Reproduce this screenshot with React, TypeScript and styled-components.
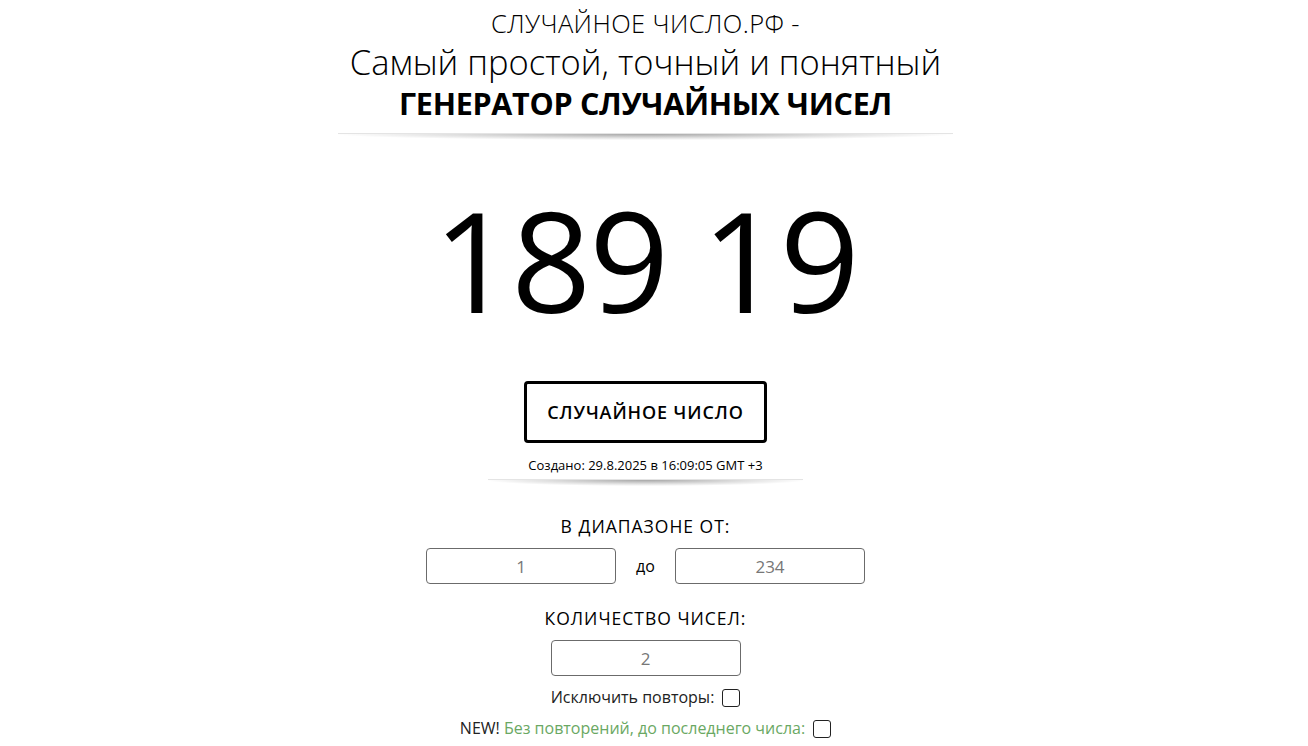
import React from "react";
import styled, { createGlobalStyle } from "styled-components";

const GlobalStyle = createGlobalStyle`
  html, body {
    margin: 0;
    padding: 0;
    background: #fff;
  }
  body {
    font-family: "Open Sans", "Noto Sans", sans-serif;
    color: #000;
  }
`;

// the original page has a vertical scrollbar, so its centre sits ~9px left
const Page = styled.div`
  display: flex;
  flex-direction: column;
  align-items: center;
  box-sizing: border-box;
  width: 100%;
  padding: 5px 17px 0 0;
`;

const Header = styled.header`
  display: flex;
  flex-direction: column;
  align-items: center;
  width: 615px;
  padding-bottom: 10px;
`;

const SiteName = styled.div`
  font-size: 25.5px;
  font-weight: 300;
  line-height: 36px;
  letter-spacing: 0.4px;
`;

const Tagline = styled.div`
  font-size: 34.5px;
  font-weight: 300;
  line-height: 42px;
`;

const Title = styled.h1`
  margin: 0;
  font-size: 30.5px;
  font-weight: 700;
  line-height: 40px;
  letter-spacing: -0.3px;
`;

const Divider = styled.div<{ $width: number }>`
  width: ${(p) => p.$width}px;
  height: 6px;
  background: radial-gradient(
    ellipse at 50% 0%,
    rgba(0, 0, 0, 0.35) 0%,
    rgba(0, 0, 0, 0.12) 45%,
    rgba(0, 0, 0, 0) 72%
  );
  border-top: 1px solid #e4e4e4;
`;

const Result = styled.div`
  font-size: 140px;
  font-weight: 400;
  line-height: 1;
  margin-top: 49px;
  letter-spacing: -2px;
`;

const GenerateButton = styled.button`
  margin-top: 52px;
  width: 243px;
  height: 62px;
  background: #fff;
  border: 3px solid #000;
  border-radius: 4px;
  font-family: inherit;
  font-size: 18px;
  font-weight: 600;
  letter-spacing: 0.9px;
  color: #000;
  cursor: pointer;
`;

const Created = styled.div`
  margin-top: 13px;
  font-size: 13px;
  line-height: 18px;
  margin-bottom: 5px;
`;

const Label = styled.div`
  margin-top: 28px;
  font-size: 17.5px;
  font-weight: 500;
  letter-spacing: 1px;
  line-height: 24px;
`;

const Row = styled.div`
  display: flex;
  align-items: center;
  gap: 19px;
  margin-top: 10px;
`;

const Field = styled.input`
  box-sizing: border-box;
  width: 190px;
  height: 36px;
  border: 1px solid #6b6b6b;
  border-radius: 4px;
  font-family: inherit;
  font-size: 17px;
  color: #777;
  text-align: center;
  outline: none;
`;

const Between = styled.span`
  font-size: 16px;
  width: 21px;
  text-align: center;
`;

const CountLabel = styled(Label)`
  margin-top: 22px;
`;

const OptionRow = styled.label<{ $gap: number }>`
  display: flex;
  align-items: center;
  gap: 8px;
  margin-top: ${(p) => p.$gap}px;
  font-size: 16px;
  line-height: 23px;
  color: #222;
`;

const Green = styled.span`
  color: #6aa863;
`;

const Box = styled.span`
  box-sizing: border-box;
  width: 18px;
  height: 18px;
  border: 1.5px solid #222;
  border-radius: 3px;
  background: #fff;
`;

export default function App() {
  return (
    <>
      <GlobalStyle />
      <Page>
        <Header>
          <SiteName>СЛУЧАЙНОЕ ЧИСЛО.РФ -</SiteName>
          <Tagline>Самый простой, точный и понятный</Tagline>
          <Title>ГЕНЕРАТОР СЛУЧАЙНЫХ ЧИСЕЛ</Title>
        </Header>
        <Divider $width={615} />
        <Result>189 19</Result>
        <GenerateButton>СЛУЧАЙНОЕ ЧИСЛО</GenerateButton>
        <Created>Создано: 29.8.2025 в 16:09:05 GMT +3</Created>
        <Divider $width={315} />
        <Label>В ДИАПАЗОНЕ ОТ:</Label>
        <Row>
          <Field defaultValue="1" />
          <Between>до</Between>
          <Field defaultValue="234" />
        </Row>
        <CountLabel>КОЛИЧЕСТВО ЧИСЕЛ:</CountLabel>
        <Row>
          <Field defaultValue="2" />
        </Row>
        <OptionRow $gap={10}>
          Исключить повторы: <Box />
        </OptionRow>
        <OptionRow $gap={8}>
          <span>
            NEW! <Green>Без повторений, до последнего числа:</Green>
          </span>
          <Box />
        </OptionRow>
      </Page>
    </>
  );
}
